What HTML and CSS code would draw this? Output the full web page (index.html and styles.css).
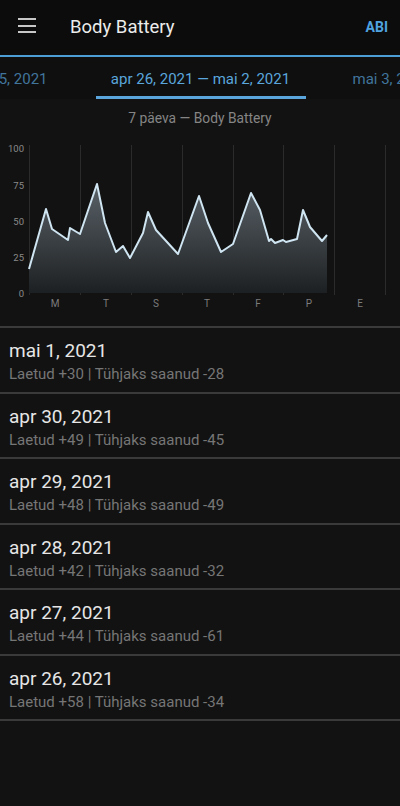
FILE: index.html
```html
<!DOCTYPE html>
<html lang="et">
  <head>
    <meta charset="UTF-8" />
    <meta name="viewport" content="width=device-width, initial-scale=1.0" />
    <title>Body Battery</title>
    <link rel="stylesheet" href="styles.css">
  </head>
  <body>
    <div class="header">
      <div class="menu">
        <span></span>
        <span></span>
        <span></span>
      </div>
      <div class="title">Body Battery</div>
      <div class="help">ABI</div>
    </div>
    <div class="tabs">
      <div class="tab side left"><span>apr 19, 2021 — apr 25, 2021</span></div>
      <div class="tab current">apr 26, 2021 — mai 2, 2021</div>
      <div class="tab side right"><span>mai 3, 2021 — mai 9, 2021</span></div>
    </div>
    <div class="caption">7 päeva — Body Battery</div>
    <svg class="chart" viewBox="0 126 400 200" width="400" height="200">
      <defs>
        <linearGradient id="fill" gradientUnits="userSpaceOnUse" x1="0" y1="184" x2="0" y2="293">
          <stop offset="0" stop-color="#5a6268" />
          <stop offset="1" stop-color="#1d2022" />
        </linearGradient>
      </defs>
      <g class="grid">
        <line x1="29.5" y1="145" x2="29.5" y2="295" />
        <line x1="80.5" y1="145" x2="80.5" y2="295" />
        <line x1="131.5" y1="145" x2="131.5" y2="295" />
        <line x1="182.5" y1="145" x2="182.5" y2="295" />
        <line x1="233.5" y1="145" x2="233.5" y2="295" />
        <line x1="283.5" y1="145" x2="283.5" y2="295" />
        <line x1="334.5" y1="145" x2="334.5" y2="295" />
        <line x1="385.5" y1="145" x2="385.5" y2="295" />
      </g>
      <polygon class="area" points="29,269 46,209 52,229 68,240 70,228 80,234 97,184 105,223 116,252 123,246 130,258 143,233 148,212 156,230 178,254 199,196 208,223 221,252 233,244 251,193 260,210 269,241 271,239 275,243 283,240 286,242 297,239 303,210 310,227 322,241 327,235 327,293 29,293" />
      <polyline class="line" points="29,269 46,209 52,229 68,240 70,228 80,234 97,184 105,223 116,252 123,246 130,258 143,233 148,212 156,230 178,254 199,196 208,223 221,252 233,244 251,193 260,210 269,241 271,239 275,243 283,240 286,242 297,239 303,210 310,227 322,241 327,235" />
      <g class="ylabels">
        <text x="24" y="151.5">100</text>
        <text x="24" y="189">75</text>
        <text x="24" y="225">50</text>
        <text x="24" y="261">25</text>
        <text x="24" y="296.5">0</text>
      </g>
      <g class="days">
        <text x="55" y="306.5">M</text>
        <text x="106" y="306.5">T</text>
        <text x="156" y="306.5">S</text>
        <text x="207" y="306.5">T</text>
        <text x="258" y="306.5">F</text>
        <text x="309" y="306.5">P</text>
        <text x="360" y="306.5">E</text>
      </g>
    </svg>
    <ul class="days-list">
      <li>
        <div class="date">mai 1, 2021</div>
        <div class="stats">Laetud +30 | Tühjaks saanud -28</div>
      </li>
      <li>
        <div class="date">apr 30, 2021</div>
        <div class="stats">Laetud +49 | Tühjaks saanud -45</div>
      </li>
      <li>
        <div class="date">apr 29, 2021</div>
        <div class="stats">Laetud +48 | Tühjaks saanud -49</div>
      </li>
      <li>
        <div class="date">apr 28, 2021</div>
        <div class="stats">Laetud +42 | Tühjaks saanud -32</div>
      </li>
      <li>
        <div class="date">apr 27, 2021</div>
        <div class="stats">Laetud +44 | Tühjaks saanud -61</div>
      </li>
      <li>
        <div class="date">apr 26, 2021</div>
        <div class="stats">Laetud +58 | Tühjaks saanud -34</div>
      </li>
    </ul>
  </body>
</html>
```
FILE: styles.css
```css
* {
  font-family: Roboto, "Liberation Sans", sans-serif;
  box-sizing: border-box;
}
body {
  margin: 0;
  background-color: #121212;
  height: 806px;
  overflow: hidden;
}
.header {
  display: flex;
  align-items: center;
  height: 57px;
  padding: 0 12px 2px 18px;
  background-color: #0c0c0c;
  border-bottom: 2px solid #4c9fd6;
}
.menu {
  display: flex;
  flex-direction: column;
  gap: 4.5px;
  width: 18px;
  margin-top: -2px;
}
.menu span {
  display: block;
  height: 2px;
  background-color: #c8c8c8;
}
.title {
  margin-left: 34px;
  font-size: 18.5px;
  color: #ececec;
  flex: 1;
}
.help {
  font-size: 14px;
  font-weight: 700;
  color: #4fa3e0;
}
.tabs {
  display: flex;
  height: 42px;
  background-color: #0f0f0f;
  overflow: hidden;
}
.tab {
  font-size: 15px;
  line-height: 20px;
  padding-top: 12px;
  white-space: nowrap;
}
.side {
  flex: 1;
  min-width: 0;
  display: flex;
  overflow: hidden;
  color: #41759c;
}
.left {
  justify-content: flex-end;
  padding-right: 48px;
}
.right {
  padding-left: 47px;
}
.current {
  width: 210px;
  text-align: center;
  color: #5aa6dc;
  border-bottom: 3px solid #5aa6dc;
  height: 42px;
}
.caption {
  margin-top: 11px;
  text-align: center;
  font-size: 13.8px;
  line-height: 16px;
  color: #858585;
}
.chart {
  display: block;
}
.grid line {
  stroke: #2b2b2b;
  stroke-width: 1;
}
.area {
  fill: url(#fill);
}
.line {
  fill: none;
  stroke: #cfe5f1;
  stroke-width: 2;
  stroke-linejoin: round;
}
.ylabels text {
  font-size: 9.5px;
  fill: #8a8a8a;
  text-anchor: end;
}
.days text {
  font-size: 10px;
  fill: #7c7c7c;
  text-anchor: middle;
}
.days-list {
  list-style-type: none;
  margin: 0;
  padding: 0;
  border-top: 2px solid #3a3a3a;
}
.days-list > li {
  padding: 12px 9px 8.5px;
  border-bottom: 2px solid #3a3a3a;
}
.date {
  font-size: 19px;
  line-height: 22px;
  color: #e6e6e6;
}
.stats {
  margin-top: 3px;
  font-size: 15px;
  line-height: 18px;
  color: #767676;
}
```
